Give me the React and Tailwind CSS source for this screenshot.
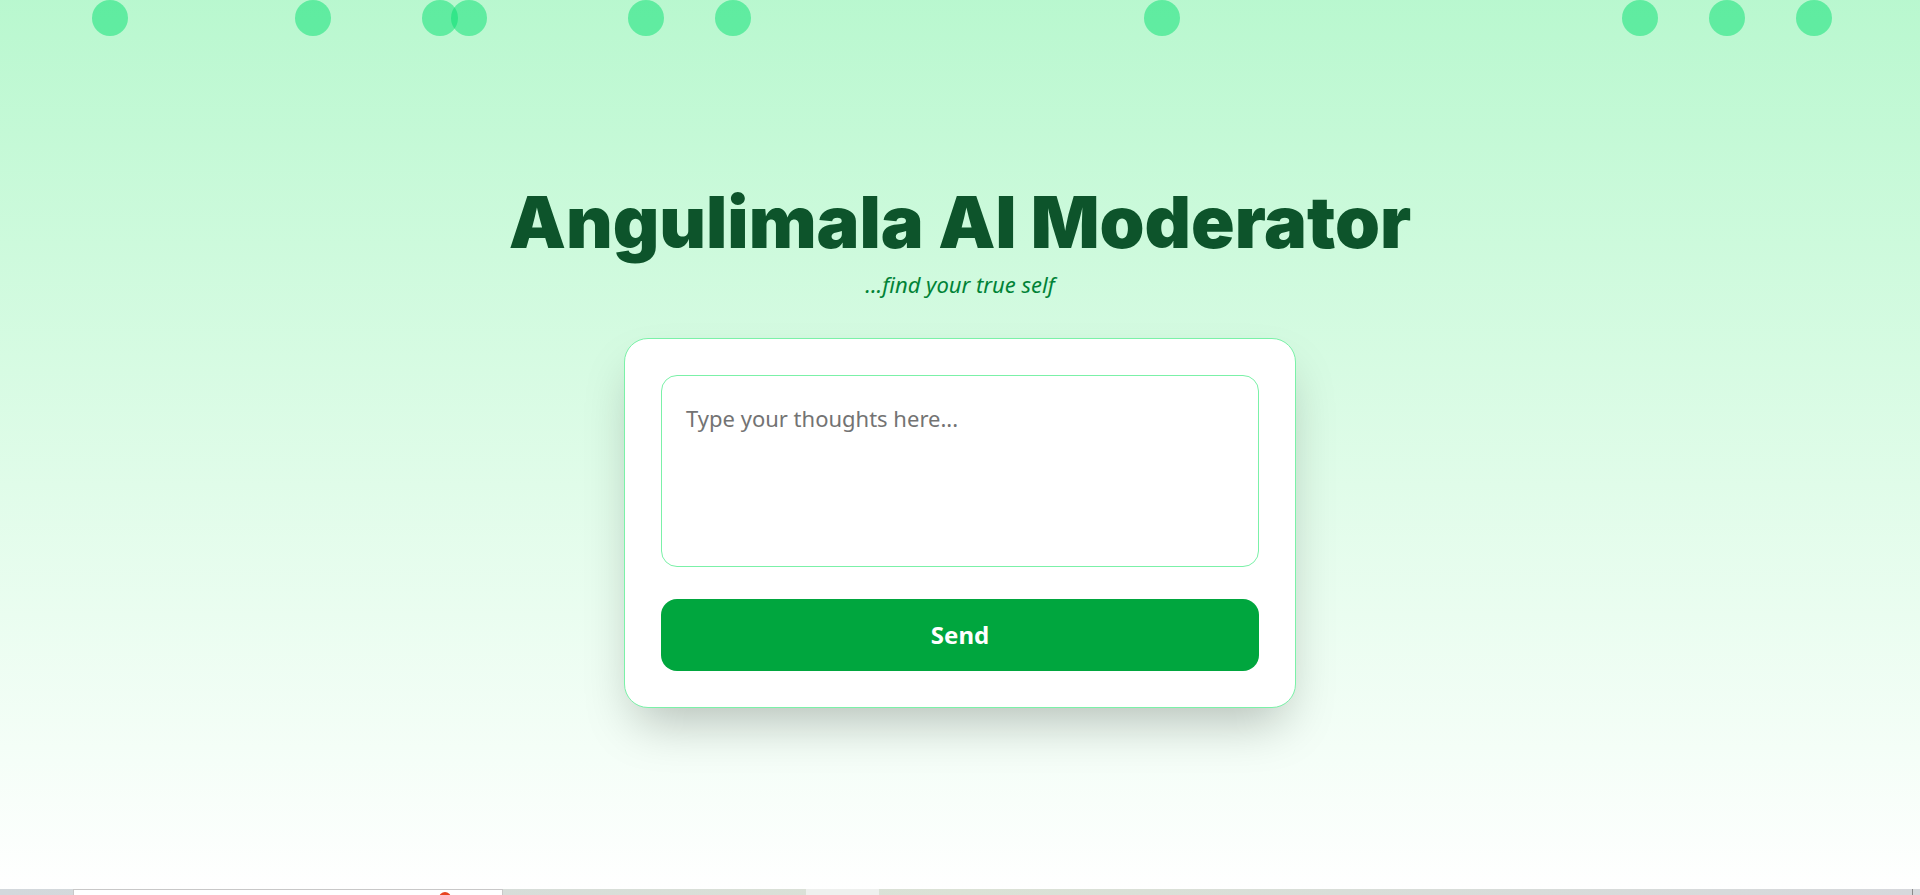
import { useState } from 'react';

const bubbles = [110, 313, 440, 469, 646, 733, 1162, 1640, 1727, 1814];

const App = () => {
    const [text, setText] = useState('');

    return (
        <div className="relative flex h-[895px] flex-col overflow-hidden bg-gradient-to-b from-green-200 to-white font-['Noto_Sans',sans-serif]">
            {/* floating bubbles */}
            {bubbles.map((x) => (
                <span
                    key={x}
                    className="absolute top-0 h-9 w-9 -translate-x-1/2 rounded-full bg-green-400/50"
                    style={{ left: x }}
                />
            ))}

            <main className="flex flex-1 flex-col items-center pt-[186px]">
                <h1 className="font-['Inter',sans-serif] text-[72px] font-black leading-none text-green-900">
                    Angulimala AI Moderator
                </h1>
                <p className="mt-[12px] text-[22px] italic leading-7 text-green-700">...find your true self</p>

                <div className="mt-[40px] w-[672px] rounded-3xl border border-green-300 bg-white p-9 shadow-2xl">
                    <textarea
                        value={text}
                        onChange={(e) => setText(e.target.value)}
                        placeholder="Type your thoughts here..."
                        className="block h-[192px] w-full resize-none rounded-2xl border border-green-300 px-6 pt-[26px] pb-6 text-[22px] text-gray-800 placeholder-neutral-500 outline-none"
                    />
                    <button className="mt-8 h-[72px] w-full rounded-2xl bg-green-600 text-2xl font-bold text-white">
                        Send
                    </button>
                </div>
            </main>

            {/* bottom strip */}
            <div className="flex h-[6px] bg-gradient-to-r from-[#d3d8dc] via-[#dbe2d6] to-[#d6d8dc]">
                <div className="w-[73px]" />
                <div className="relative w-[430px] border-t border-l border-r border-[#c8c8c8] bg-white">
                    <span className="absolute left-[365px] top-[2px] h-3 w-3 rounded-full bg-[#e8431f]" />
                </div>
                <div className="w-[303px]" />
                <div className="w-[73px] bg-[#eef0ee]" />
                <div className="flex-1" />
                <div className="mr-[7px] w-px bg-[#8a8a8a]" />
            </div>
        </div>
    );
};

export default App;
